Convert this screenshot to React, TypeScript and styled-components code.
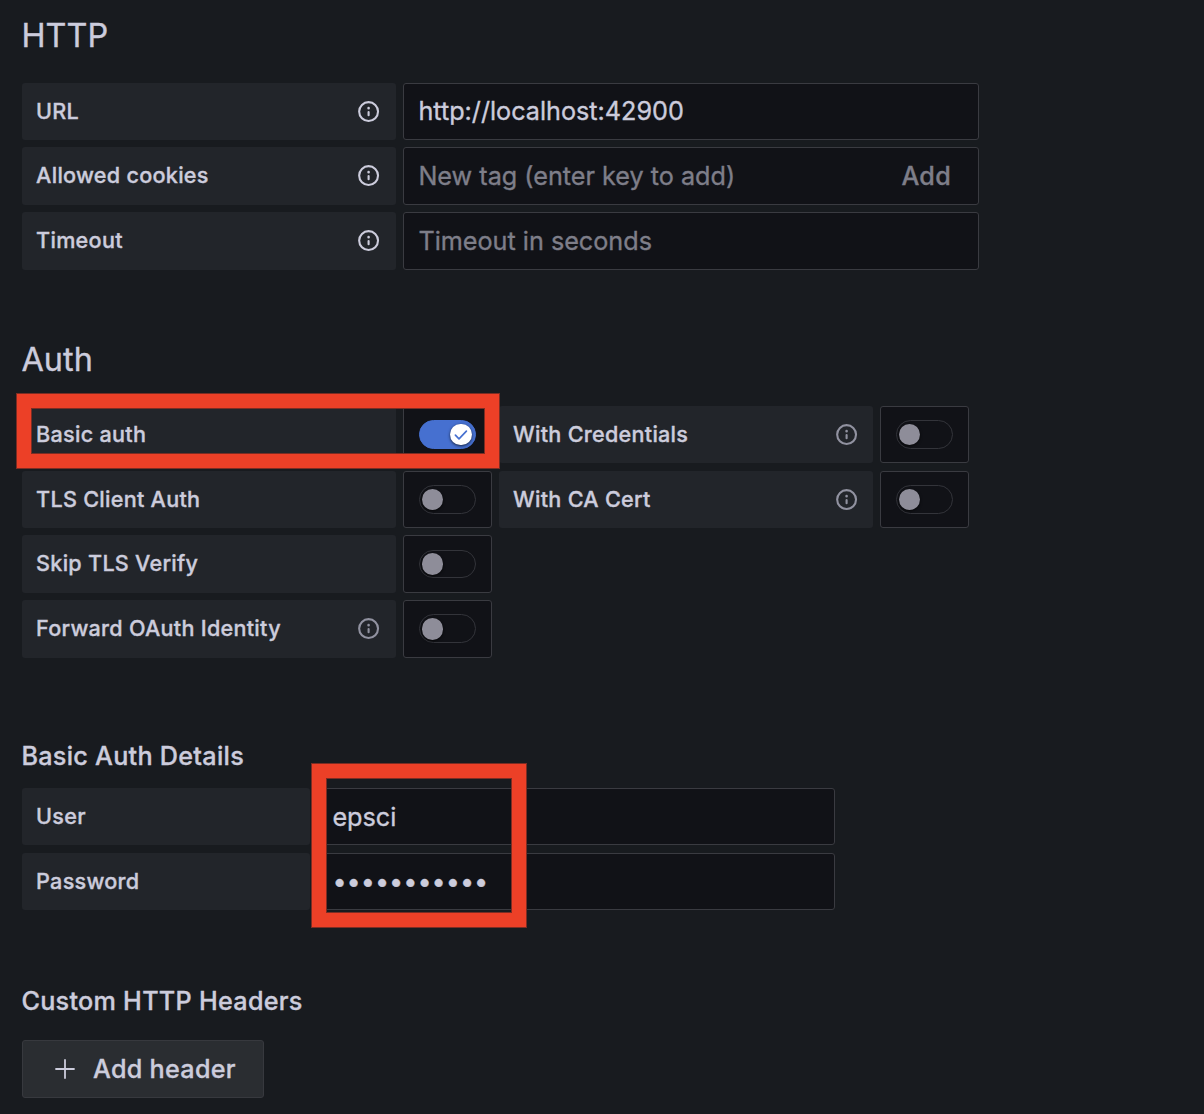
import React from 'react';
import styled, { createGlobalStyle } from 'styled-components';

const GlobalStyle = createGlobalStyle`
  *, *::before, *::after { box-sizing: border-box; }
  body {
    margin: 0;
    background: #181b1f;
    color: #ccccdc;
    font-family: Inter, "Liberation Sans", sans-serif;
    letter-spacing: 0.01071em;
    -webkit-text-stroke: 0.35px;
  }
`;

const Page = styled.main`
  height: 1114px;
  padding-left: 22px;
  overflow: hidden;
  background: #181b1f;
`;

const Section = styled.section<{ $top: number }>`
  display: flex;
  flex-direction: column;
  align-items: flex-start;
  padding-top: ${p => p.$top}px;
`;

const Title = styled.h3<{ $gap: number }>`
  margin: 0 0 ${p => p.$gap}px -0.6px;
  font-size: 32.4px;
  line-height: 40px;
  font-weight: 400;
  letter-spacing: 0.002em;
`;

const Subtitle = styled.h6<{ $gap: number }>`
  margin: 0 0 ${p => p.$gap}px -0.6px;
  font-size: 25.2px;
  line-height: 30px;
  font-weight: 500;
  letter-spacing: 0.01071em;
`;

const Rows = styled.div<{ $gap?: number }>`
  position: relative;
  display: flex;
  flex-direction: column;
  gap: ${p => p.$gap ?? 7.1}px;
`;

const Row = styled.div<{ $height?: number }>`
  display: flex;
  gap: 7px;
  height: ${p => p.$height ?? 57.6}px;
`;

const Label = styled.label<{ $width?: number; $end?: number }>`
  display: flex;
  align-items: center;
  justify-content: space-between;
  width: ${p => p.$width ?? 374}px;
  padding: 0 ${p => p.$end ?? 14.4}px 0 14.1px;
  border-radius: 3px;
  background: #22252a;
  font-size: 21.6px;
  font-weight: 500;
  line-height: 26px;
  letter-spacing: 0.0125em;
`;

const LabelText = styled.span`
  padding-bottom: 1.2px;
`;

const InfoSvg = styled.svg<{ $muted?: boolean }>`
  width: 25.2px;
  height: 25.2px;
  fill: ${p => (p.$muted ? '#9192a0' : '#ccccdc')};
  stroke: none;
`;

const Field = styled.div<{ $width: number }>`
  display: flex;
  align-items: center;
  width: ${p => p.$width}px;
  padding: 0 14.4px;
  border: 1px solid #3a3b41;
  border-radius: 3px;
  background: #111217;
`;

const Input = styled.input`
  flex: 1;
  min-width: 0;
  height: 32px;
  padding: 0;
  border: 0;
  outline: 0;
  background: transparent;
  color: #ccccdc;
  font: inherit;
  font-size: 25.2px;
  letter-spacing: 0;
  &::placeholder { color: #7e7e89; opacity: 1; }
`;

const AddTag = styled.button`
  padding: 0 12.6px;
  border: 0;
  background: transparent;
  color: #7e7e89;
  font: inherit;
  font-size: 25.2px;
  font-weight: 500;
  letter-spacing: 0.01071em;
`;

const SwitchBox = styled.div`
  display: flex;
  align-items: center;
  justify-content: center;
  width: 89px;
  border: 1px solid #3a3b41;
  border-radius: 3px;
  background: #111217;
`;

const Track = styled.span<{ $on?: boolean }>`
  display: flex;
  align-items: center;
  justify-content: ${p => (p.$on ? 'flex-end' : 'flex-start')};
  width: 57px;
  height: 28.6px;
  padding: 0 ${p => (p.$on ? 3 : 1.5)}px;
  border: 1px solid ${p => (p.$on ? '#4670d0' : '#33343a')};
  border-radius: 15px;
  background: ${p => (p.$on ? '#4670d0' : '#111217')};
`;

const Knob = styled.span<{ $on?: boolean }>`
  display: flex;
  align-items: center;
  justify-content: center;
  width: 21.6px;
  height: 21.6px;
  border-radius: 50%;
  background: ${p => (p.$on ? '#ffffff' : '#8e8d99')};
  box-shadow: 0 1px 3px rgba(0, 0, 0, 0.7);
`;

const Highlight = styled.div<{ $x: number; $y: number; $w: number; $h: number }>`
  position: absolute;
  left: ${p => p.$x}px;
  top: ${p => p.$y}px;
  width: ${p => p.$w}px;
  height: ${p => p.$h}px;
  border: 14px solid #ec4027;
  box-shadow: 0 0 0 1px #7c2d23, inset 0 0 0 1px #7c2d23;
  pointer-events: none;
`;

const HeaderButton = styled.button`
  display: flex;
  align-items: center;
  gap: 17.4px;
  width: 242px;
  height: 58px;
  padding: 0 0 0 30.6px;
  border: 1px solid #37393e;
  border-radius: 3px;
  background: #2a2d31;
  color: #ccccdc;
  font: inherit;
  font-size: 25.2px;
  font-weight: 500;
  letter-spacing: 0.01071em;
`;

const Info = ({ muted }: { muted?: boolean }) => (
  <InfoSvg viewBox="0 0 24 24" $muted={muted}>
    <path d="M12,2A10,10,0,1,0,22,12,10,10,0,0,0,12,2Zm0,18a8,8,0,1,1,8-8A8,8,0,0,1,12,20Zm0-8.5a1,1,0,0,0-1,1v3a1,1,0,0,0,2,0v-3A1,1,0,0,0,12,11.5Zm0-4a1.25,1.25,0,1,0,1.25,1.25A1.25,1.25,0,0,0,12,7.5Z" />
  </InfoSvg>
);

const Switch = ({ on }: { on?: boolean }) => (
  <SwitchBox>
    <Track $on={on}>
      <Knob $on={on}>
        {on && (
          <svg width="14" height="12" viewBox="0 0 14 12" fill="none" stroke="#4670d0" strokeWidth="1.7" strokeLinecap="round" strokeLinejoin="round">
            <path d="M1.4 6.2 5 9.8 12.4 2.2" />
          </svg>
        )}
      </Knob>
    </Track>
  </SwitchBox>
);

export default function App() {
  return (
    <>
      <GlobalStyle />
      <Page>
        <Section $top={16}>
          <Title $gap={26.6}>HTTP</Title>
          <Rows>
            <Row>
              <Label><LabelText>URL</LabelText><Info /></Label>
              <Field $width={576}><Input defaultValue="http://localhost:42900" /></Field>
            </Row>
            <Row>
              <Label><LabelText>Allowed cookies</LabelText><Info /></Label>
              <Field $width={576}>
                <Input placeholder="New tag (enter key to add)" />
                <AddTag>Add</AddTag>
              </Field>
            </Row>
            <Row>
              <Label><LabelText>Timeout</LabelText><Info /></Label>
              <Field $width={576}><Input placeholder="Timeout in seconds" /></Field>
            </Row>
          </Rows>
        </Section>

        <Section $top={70.4}>
          <Title $gap={25.9}>Auth</Title>
          <Rows>
            <Row>
              <Label><LabelText>Basic auth</LabelText></Label>
              <Switch on />
              <Label $end={13.4}><LabelText>With Credentials</LabelText><Info muted /></Label>
              <Switch />
            </Row>
            <Row>
              <Label><LabelText>TLS Client Auth</LabelText></Label>
              <Switch />
              <Label $end={13.4}><LabelText>With CA Cert</LabelText><Info muted /></Label>
              <Switch />
            </Row>
            <Row>
              <Label><LabelText>Skip TLS Verify</LabelText></Label>
              <Switch />
            </Row>
            <Row>
              <Label><LabelText>Forward OAuth Identity</LabelText><Info muted /></Label>
              <Switch />
            </Row>
            <Highlight $x={-5} $y={-12} $w={482} $h={74} />
          </Rows>
        </Section>

        <Section $top={83.3}>
          <Subtitle $gap={17}>Basic Auth Details</Subtitle>
          <Rows $gap={7.2}>
            <Row $height={57.6}>
              <Label $width={288}><LabelText>User</LabelText></Label>
              <Field $width={518}><Input defaultValue="epsci" /></Field>
            </Row>
            <Row $height={57.4}>
              <Label $width={288}><LabelText>Password</LabelText></Label>
              <Field $width={518}><Input type="password" defaultValue="secretvalue" /></Field>
            </Row>
            <Highlight $x={290} $y={-24} $w={214} $h={163} />
          </Rows>
        </Section>

        <Section $top={76}>
          <Subtitle $gap={24}>Custom HTTP Headers</Subtitle>
          <HeaderButton>
            <svg width="22" height="22" viewBox="0 0 22 22" fill="none" stroke="#ccccdc" strokeWidth="1.8" strokeLinecap="round">
              <path d="M11 2v18M2 11h18" />
            </svg>
            Add header
          </HeaderButton>
        </Section>
      </Page>
    </>
  );
}
